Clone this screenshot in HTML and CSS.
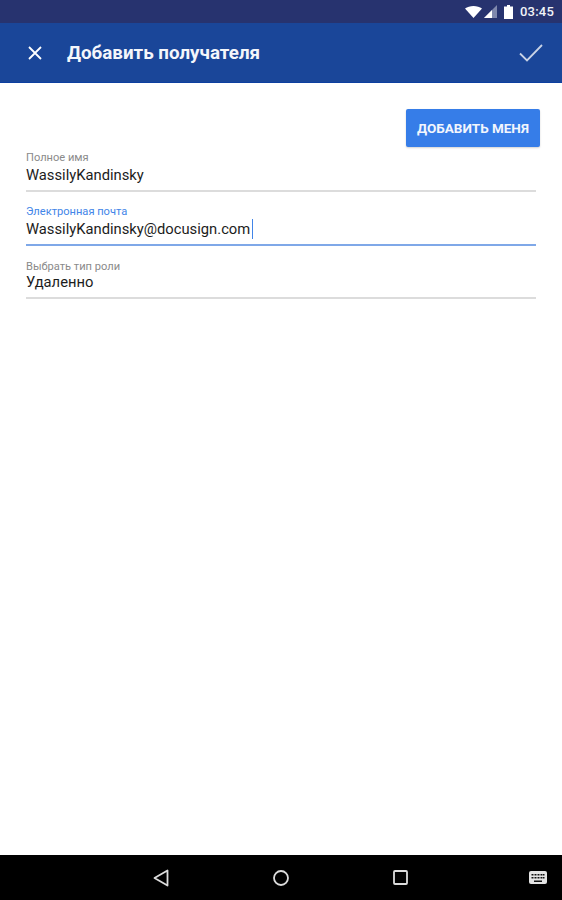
FILE: index.html
```html
<!DOCTYPE html>
<html lang="ru">
<head>
    <meta charset="UTF-8">
    <title>Добавить получателя</title>
    <link rel="stylesheet" href="styles.css">
</head>
<body>
    <div class="status-bar">
        <svg class="icon-wifi" width="17" height="12" viewBox="0 0 17 12"><path d="M0 2.6C2.3.9 5.2 0 8.5 0s6.2.9 8.5 2.6L8.5 12z" fill="#fff"/></svg>
        <svg class="icon-signal" width="13" height="13" viewBox="0 0 13 13"><path d="M13 0v13H0z" fill="#7f88ad"/><path d="M8 5v8H0z" fill="#fff"/></svg>
        <svg class="icon-battery" width="9" height="14" viewBox="0 0 9 14"><path d="M3 0h3v1.500h3V14H0V1.500h3z" fill="#fff"/></svg>
        <span class="clock">03:45</span>
    </div>
    <header class="app-bar">
        <svg class="icon-close" width="14" height="14" viewBox="0 0 14 14"><path d="M1 1l12 12M13 1L1 13" stroke="#fff" stroke-width="1.800" fill="none"/></svg>
        <h1>Добавить получателя</h1>
        <svg class="icon-check" width="24" height="18" viewBox="0 0 24 18"><path d="M1 9.500l7 7L23 1" stroke="#c9d3e6" stroke-width="1.800" fill="none"/></svg>
    </header>
    <main class="content">
        <div class="actions">
            <button type="button" class="add-me">ДОБАВИТЬ МЕНЯ</button>
        </div>
        <div class="field">
            <label>Полное имя</label>
            <div class="value">WassilyKandinsky</div>
        </div>
        <div class="field active">
            <label>Электронная почта</label>
            <div class="value">WassilyKandinsky@docusign.com<span class="caret"></span></div>
        </div>
        <div class="field role">
            <label>Выбрать тип роли</label>
            <div class="value">Удаленно</div>
        </div>
    </main>
    <nav class="nav-bar">
        <svg class="nav-back" width="16" height="18" viewBox="0 0 16 18"><path d="M14.500 1.500v15L1.500 9z" stroke="#dcdcdc" stroke-width="1.800" fill="none" stroke-linejoin="round"/></svg>
        <svg class="nav-home" width="16" height="16" viewBox="0 0 16 16"><circle cx="8" cy="8" r="7" stroke="#dcdcdc" stroke-width="1.800" fill="none"/></svg>
        <svg class="nav-recent" width="15" height="15" viewBox="0 0 15 15"><rect x="1" y="1" width="13" height="13" rx="1" stroke="#dcdcdc" stroke-width="1.800" fill="none"/></svg>
        <svg class="nav-keyboard" width="18" height="13" viewBox="0 0 18 13">
            <rect width="18" height="13" rx="2" fill="#e4e4e4"/>
            <path d="M2.500 3h2v1.500h-2zM5.500 3h2v1.500h-2zM8.500 3h2v1.500h-2zM11.500 3h2v1.500h-2zM14 3h1.500v1.500H14zM2.500 6h2v1.500h-2zM5.500 6h2v1.500h-2zM8.500 6h2v1.500h-2zM11.500 6h2v1.500h-2zM14 6h1.500v1.500H14zM5 9.500h8V11H5z" fill="#111"/>
        </svg>
    </nav>
</body>
</html>
```

FILE: styles.css
```css
html, body {
    height: 100%;
}
body {
    margin: 0;
    height: 100vh;
    display: flex;
    flex-direction: column;
    font-family: Roboto, Arial, sans-serif;
    background: #fff;
    overflow: hidden;
}
.status-bar {
    height: 23px;
    flex: none;
    background: #27336f;
    display: flex;
    align-items: center;
    justify-content: flex-end;
    padding-right: 8px;
    color: #f2f3f8;
}
.icon-wifi {
    margin-right: 2px;
}
.icon-signal {
    margin-right: 7px;
}
.icon-battery {
    margin-right: 7px;
}
.clock {
    font-size: 13px;
    font-weight: 500;
    letter-spacing: 0.2px;
}
.app-bar {
    height: 59px;
    flex: none;
    background: #1a4699;
    border-bottom: 1px solid #0d3fa0;
    display: flex;
    align-items: center;
    padding: 0 19px 0 28px;
}
.app-bar h1 {
    margin: 0 0 0 25px;
    flex: 1;
    font-size: 18.8px;
    font-weight: 700;
    color: #f4f6fb;
}
.content {
    flex: 1;
    padding: 26px 26px 0;
}
.actions {
    display: flex;
    justify-content: flex-end;
    margin-right: -4px;
    margin-bottom: 4px;
}
.add-me {
    width: 134px;
    height: 38px;
    padding: 0;
    border: none;
    border-radius: 2px;
    background: #367de8;
    color: #f2f6fd;
    font-family: inherit;
    font-size: 13.5px;
    font-weight: 700;
    box-shadow: 0 1px 2px rgba(0, 0, 0, 0.18);
}
.field {
    height: 39px;
    margin-bottom: 12.5px;
    border-bottom: 2px solid #dcdcdc;
}
.field label {
    display: block;
    height: 13px;
    line-height: 13px;
    font-size: 11.1px;
    color: #8a8a8a;
}
.field .value {
    height: 20px;
    margin-top: 1px;
    line-height: 20px;
    font-size: 14.75px;
    color: #1c1c1c;
}
.field.active {
    border-bottom-color: #7fa8e8;
}
.field.active label {
    color: #4285e8;
}
.field.role label {
    padding-top: 2px;
}
.field.role .value {
    margin-top: -1px;
}
.caret {
    display: inline-block;
    width: 1px;
    height: 20px;
    margin-left: 2px;
    vertical-align: top;
    background: #4285e8;
}
.nav-bar {
    height: 45px;
    flex: none;
    background: #000;
    display: flex;
    align-items: center;
    padding-left: 153px;
}
.nav-home {
    margin-left: 104px;
}
.nav-recent {
    margin-left: 104px;
}
.nav-keyboard {
    margin-left: 121px;
}
```
